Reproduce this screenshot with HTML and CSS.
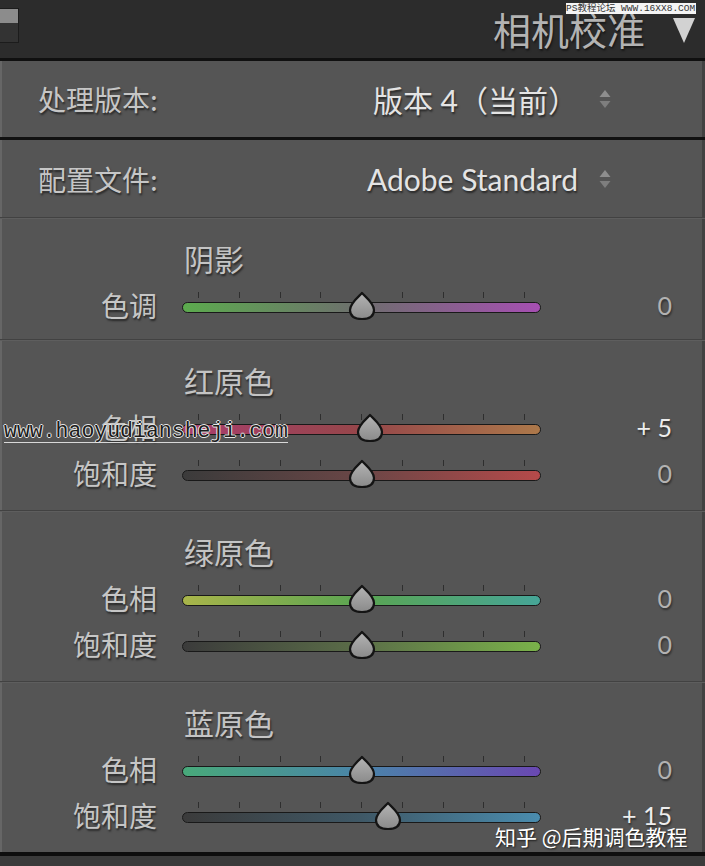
FILE: index.html
```html
<!DOCTYPE html>
<html>
    <head>
        <meta charset="UTF-8">
        <title>相机校准</title>
        <link rel="stylesheet" href="styles.css">
    </head>
    <body>
        <svg class="defs" width="0" height="0">
            <defs>
                <linearGradient id="thumbFill" x1="0" y1="0" x2="0" y2="1">
                    <stop offset="0" stop-color="#b4b4b4"/>
                    <stop offset="1" stop-color="#8a8a8a"/>
                </linearGradient>
                <symbol id="thumb" viewBox="0 0 28 30">
                    <path d="M14 2 C16.5 5 26 12 26 19 C26 25 22 28 14 28 C6 28 2 25 2 19 C2 12 11.5 5 14 2 Z" fill="url(#thumbFill)" stroke="#141414" stroke-width="2.2" stroke-linejoin="round"/>
                </symbol>
                <symbol id="updown" viewBox="0 0 14 20">
                    <path d="M7 1 L12.5 8 L1.5 8 Z" fill="#8e8e8e"/>
                    <path d="M1.5 12 L12.5 12 L7 19 Z" fill="#7e7e7e"/>
                </symbol>
            </defs>
        </svg>

        <div class="panel">
            <header class="head">
                <span class="toggle"></span>
                <h1>相机校准</h1>
                <svg class="collapse" width="22" height="25" viewBox="0 0 22 25"><path d="M0 0 L22 0 L11 25 Z" fill="#d2d2d2"/></svg>
            </header>

            <div class="pick split">
                <span class="pick-label">处理版本:</span>
                <span class="pick-value">版本 4（当前）</span>
                <svg class="arrows"><use href="#updown"/></svg>
            </div>
            <div class="pick">
                <span class="pick-label">配置文件:</span>
                <span class="pick-value">Adobe Standard</span>
                <svg class="arrows"><use href="#updown"/></svg>
            </div>

            <section class="group single">
                <h2>阴影</h2>
                <div class="row">
                    <span class="lbl">色调</span>
                    <div class="slider">
                        <div class="ticks"><i></i><i></i><i></i><i></i><i></i><i></i><i></i><i></i><i></i></div>
                        <div class="track tint"></div>
                        <svg class="thumb" style="left: 50%"><use href="#thumb"/></svg>
                    </div>
                    <span class="val">0</span>
                </div>
            </section>

            <section class="group">
                <h2>红原色</h2>
                <div class="row">
                    <span class="lbl">色相</span>
                    <div class="slider">
                        <div class="ticks"><i></i><i></i><i></i><i></i><i></i><i></i><i></i><i></i><i></i></div>
                        <div class="track red-hue"></div>
                        <svg class="thumb" style="left: 52.5%"><use href="#thumb"/></svg>
                    </div>
                    <span class="val on">+ 5</span>
                </div>
                <div class="row">
                    <span class="lbl">饱和度</span>
                    <div class="slider">
                        <div class="ticks"><i></i><i></i><i></i><i></i><i></i><i></i><i></i><i></i><i></i></div>
                        <div class="track red-sat"></div>
                        <svg class="thumb" style="left: 50%"><use href="#thumb"/></svg>
                    </div>
                    <span class="val">0</span>
                </div>
            </section>

            <section class="group">
                <h2>绿原色</h2>
                <div class="row">
                    <span class="lbl">色相</span>
                    <div class="slider">
                        <div class="ticks"><i></i><i></i><i></i><i></i><i></i><i></i><i></i><i></i><i></i></div>
                        <div class="track green-hue"></div>
                        <svg class="thumb" style="left: 50%"><use href="#thumb"/></svg>
                    </div>
                    <span class="val">0</span>
                </div>
                <div class="row">
                    <span class="lbl">饱和度</span>
                    <div class="slider">
                        <div class="ticks"><i></i><i></i><i></i><i></i><i></i><i></i><i></i><i></i><i></i></div>
                        <div class="track green-sat"></div>
                        <svg class="thumb" style="left: 50%"><use href="#thumb"/></svg>
                    </div>
                    <span class="val">0</span>
                </div>
            </section>

            <section class="group">
                <h2>蓝原色</h2>
                <div class="row">
                    <span class="lbl">色相</span>
                    <div class="slider">
                        <div class="ticks"><i></i><i></i><i></i><i></i><i></i><i></i><i></i><i></i><i></i></div>
                        <div class="track blue-hue"></div>
                        <svg class="thumb" style="left: 50%"><use href="#thumb"/></svg>
                    </div>
                    <span class="val">0</span>
                </div>
                <div class="row">
                    <span class="lbl">饱和度</span>
                    <div class="slider">
                        <div class="ticks"><i></i><i></i><i></i><i></i><i></i><i></i><i></i><i></i><i></i></div>
                        <div class="track blue-sat"></div>
                        <svg class="thumb" style="left: 57.5%"><use href="#thumb"/></svg>
                    </div>
                    <span class="val on">+ 15</span>
                </div>
            </section>

            <div class="bottom"></div>

            <!-- watermarks lying over the screenshot -->
            <div class="mark-ps">PS教程论坛 WWW.16XX8.COM</div>
            <div class="mark-site">www.haoyudiansheji.com</div>
            <div class="mark-zhihu">知乎 @后期调色教程</div>
        </div>
    </body>
</html>
```

FILE: styles.css
```css
html,body{
    margin: 0;
    background: #3b3b3b;
    font-family: "Lato", "Noto Sans CJK SC", sans-serif;
}
.defs{
    position: absolute;
}
.panel{
    position: relative;
    width: 705px;
    background: #555555;
    box-shadow: inset 2px 0 0 #666666, inset -3px 0 0 #424242;
    overflow: hidden;
}

/* header bar */
.head{
    display: flex;
    align-items: center;
    height: 58px;
    background: #2c2c2c;
    border-bottom: 3px solid #101010;
}
.toggle{
    align-self: flex-start;
    margin-top: 8px;
    width: 19px;
    height: 35px;
    box-sizing: border-box;
    border: 1px solid #1c1c1c;
    border-left: none;
    background: linear-gradient(#8c8c8c 0 43%, #333333 43%);
}
.head h1{
    margin: 0 0 0 auto;
    font-family: "Noto Sans CJK SC", sans-serif;
    font-weight: normal;
    font-size: 38px;
    line-height: 58px;
    color: #b3b3b3;
    text-shadow: 1px 2px 2px rgba(0,0,0,0.5);
}
.collapse{
    margin: 2px 10px 0 28px;
}

/* process / profile pickers */
.pick{
    display: flex;
    align-items: center;
    height: 77px;
    padding: 0 93px 0 38px;
    font-size: 28px;
    text-shadow: 1px 2px 2px rgba(0,0,0,0.55);
}
.pick.split{
    height: 76px;
    border-bottom: 3px solid #111111;
}
.pick-label{
    flex: 1;
    font-family: "Noto Sans CJK SC", sans-serif;
    color: #c6c6c6;
}
.pick-value{
    font-size: 30px;
    color: #e4e4e4;
}
.arrows{
    width: 14px;
    height: 20px;
    margin-left: 20px;
}

/* slider groups */
.group{
    border-top: 1px solid #424242;
    box-shadow: inset 0 1px 0 #5e5e5e;
    padding: 22px 0 14px;
}
.group.single{
    padding-bottom: 11px;
}
.group h2{
    margin: 0 0 6px 184px;
    height: 36px;
    font-family: "Noto Sans CJK SC", sans-serif;
    font-weight: normal;
    font-size: 30px;
    line-height: 36px;
    color: #c4c4c4;
    text-shadow: 1px 2px 2px rgba(0,0,0,0.55);
}
.row{
    display: grid;
    grid-template-columns: 155px 359px 1fr;
    column-gap: 25px;
    align-items: center;
    height: 46px;
    padding: 0 33px 0 2px;
}
.lbl{
    text-align: right;
    font-family: "Noto Sans CJK SC", sans-serif;
    font-size: 28px;
    line-height: 44px;
    color: #c6c6c6;
    text-shadow: 1px 2px 2px rgba(0,0,0,0.55);
}
.val{
    text-align: right;
    font-size: 25px;
    color: #b2b2b2;
    text-shadow: 1px 2px 2px rgba(0,0,0,0.45);
}
.val.on{
    color: #ededed;
}
.slider{
    position: relative;
    display: flex;
    flex-direction: column;
    gap: 4px;
    margin-bottom: 6px;
}
.ticks{
    display: flex;
    justify-content: space-between;
    height: 6px;
    padding: 0 16px;
}
.ticks i{
    width: 1px;
    background: #2e2e2e;
}
.track{
    height: 11px;
    box-sizing: border-box;
    border: 1.5px solid #191919;
    border-radius: 6px;
}
.thumb{
    position: absolute;
    top: -1px;
    width: 28px;
    height: 30px;
    transform: translateX(-50%);
}
.tint{ background: linear-gradient(90deg, #5cab4e, #6e6e6e 50%, #a64fb2); }
.red-hue{ background: linear-gradient(90deg, #a83e6c, #96464a 50%, #ac784a); }
.red-sat{ background: linear-gradient(90deg, #3b3b3b, #6a4646 50%, #b64a4a); }
.green-hue{ background: linear-gradient(90deg, #a9b54a, #5aa552 50%, #46a597); }
.green-sat{ background: linear-gradient(90deg, #3b3b3b, #5b6e48 50%, #7ab24a); }
.blue-hue{ background: linear-gradient(90deg, #48a97a, #4a84a9 50%, #6a48b2); }
.blue-sat{ background: linear-gradient(90deg, #3b3b3b, #3f5866 50%, #4a8cae); }

.bottom{
    height: 10px;
    background: #3b3b3b;
    border-top: 4px solid #0e0e0e;
}

/* watermarks */
.mark-ps{
    position: absolute;
    left: 566px;
    top: 3px;
    width: 130px;
    height: 11px;
    background: #f4f4f4;
    color: #333333;
    font-family: "Liberation Mono", "Noto Sans CJK SC", monospace;
    font-size: 9.5px;
    line-height: 11px;
    white-space: nowrap;
    overflow: hidden;
}
.mark-site{
    position: absolute;
    left: 4px;
    top: 421px;
    font-family: "Liberation Mono", monospace;
    font-size: 21.5px;
    line-height: 21px;
    color: #1c1c1c;
    border-bottom: 1px solid #d8d8d8;
    text-shadow: 1px 0 #e6e6e6, -1px 0 #e6e6e6, 0 1px #e6e6e6, 0 -1px #e6e6e6;
}
.mark-zhihu{
    position: absolute;
    left: 495px;
    top: 821px;
    font-family: "Noto Sans CJK SC", sans-serif;
    font-size: 21px;
    color: #ffffff;
    text-shadow: 1px 1px 2px rgba(0,0,0,0.7);
}
```
